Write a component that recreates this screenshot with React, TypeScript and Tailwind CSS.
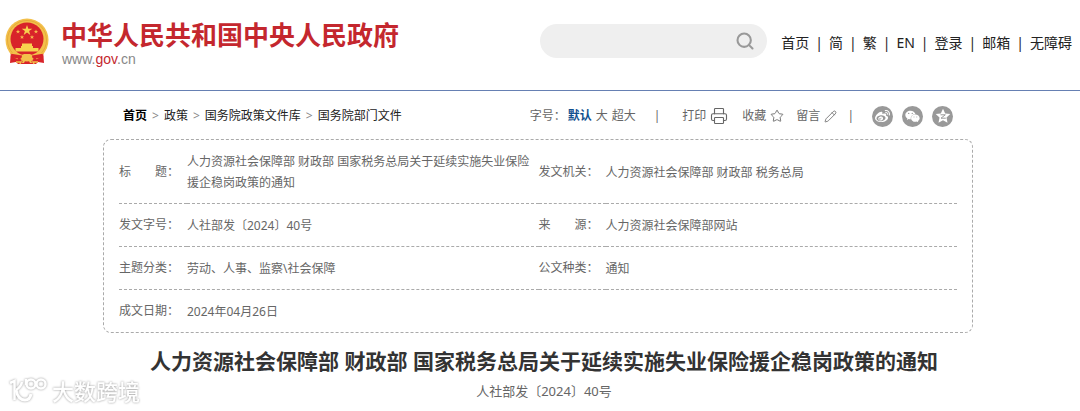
import React from 'react';
import { Pencil, Printer, Search, Star } from 'lucide-react';
import { FaWeibo, FaWeixin } from 'react-icons/fa';

const navLinks = ['首页', '简', '繁', 'EN', '登录', '邮箱', '无障碍'];
const crumbs = ['首页', '政策', '国务院政策文件库', '国务院部门文件'];

type Field = { label: string; value: string };

const rows: Field[][] = [
  [
    { label: '标　　题：', value: '人力资源社会保障部 财政部 国家税务总局关于延续实施失业保险援企稳岗政策的通知' },
    { label: '发文机关：', value: '人力资源社会保障部 财政部 税务总局' },
  ],
  [
    { label: '发文字号：', value: '人社部发〔2024〕40号' },
    { label: '来　　源：', value: '人力资源社会保障部网站' },
  ],
  [
    { label: '主题分类：', value: '劳动、人事、监察\\社会保障' },
    { label: '公文种类：', value: '通知' },
  ],
  [{ label: '成文日期：', value: '2024年04月26日' }],
];

const Emblem: React.FC = () => (
  <svg viewBox="0 0 44 48" className="h-12 w-11 shrink-0" aria-hidden="true">
    <path d="M6 32 L5 45 L11 44 L13 46 H31 L33 44 L39 45 L38 32Z" fill="#d8232a" />
    <circle cx="22" cy="22" r="21.5" fill="#f3c04b" />
    <circle cx="22" cy="22" r="19.5" fill="none" stroke="#e6ab3a" strokeWidth="1" />
    <circle cx="22" cy="21" r="16.5" fill="#d8232a" />
    <path d="M22 7l1.3 3.700h4l-3.200 2.400 1.200 3.800-3.300-2.300-3.300 2.300 1.200-3.800-3.200-2.400h4z" fill="#f8d24e" />
    <g fill="#f8b84e">
      <path d="M13 11.500l.6 1.400h1.500l-1.200 1 .5 1.500-1.400-.9-1.400.9.500-1.500-1.200-1h1.500z" />
      <path d="M31 11.500l.6 1.400h1.500l-1.200 1 .5 1.500-1.400-.9-1.400.9.500-1.500-1.200-1h1.500z" />
      <path d="M17 17l.6 1.400h1.500l-1.200 1 .5 1.500-1.400-.9-1.400.9.500-1.500-1.200-1h1.500z" />
      <path d="M27 17l.6 1.400h1.500l-1.200 1 .5 1.500-1.400-.9-1.400.9.500-1.500-1.200-1h1.500z" />
    </g>
    <path d="M17 25.500h10v2.500h1v2h5.500v3.500h-23V30H16v-2h1z" fill="#f8d24e" />
    <path d="M5 35q6-1 10 3l4-2h6l4 2q4-4 10-3l-3 4q-5-1-8 2l-6-2-6 2q-3-3-8-2z" fill="#f3c04b" />
    <path d="M6 37.500q6 1 9 1.500l-1 5M38 37.500q-6 1-9 1.500l1 5" fill="none" stroke="#d8232a" strokeWidth="3.500" />
    <path d="M15 41l3-2h8l3 2-3 1 1 3h-2l-1-2h-4l-1 2h-2l1-3z" fill="#f3c04b" />
    <path d="M11 44h5l-1 2M33 44h-5l1 2" fill="none" stroke="#f3c04b" strokeWidth="1.500" />
  </svg>
);

const Qzone: React.FC = () => (
  <svg viewBox="0 0 16 16" className="size-4" aria-hidden="true">
    <path d="M8 .8l2.200 4.700 5.100.6-3.800 3.500 1 5.100L8 12.200l-4.500 2.500 1-5.100L.7 6.100l5.100-.6z" fill="currentColor" />
    <path d="M5.500 6.800h4.800l-4.300 3.400h4.800" fill="none" stroke="#999" strokeWidth="1" />
  </svg>
);

const Watermark: React.FC = () => (
  <div className="absolute bottom-1 left-2 flex items-center gap-1 text-white drop-shadow-[0_0_1px_#999]">
    <svg viewBox="0 0 40 28" className="h-7 w-10" fill="none" stroke="currentColor" strokeWidth="2.500" aria-hidden="true">
      <path d="M2 6l4.500-2V23" />
      <path d="M14 5q-1 5-6 8" />
      <path d="M8 13q2 10 9 10 5 0 6-6" strokeWidth="3" />
      <circle cx="23" cy="7" r="4.500" />
      <circle cx="33" cy="7" r="4.500" />
      <path d="M18 2v6" />
    </svg>
    <span className="text-[22px] leading-7 font-medium">大数跨境</span>
  </div>
);

const App: React.FC = () => {
  return (
    <div
      lang="zh-CN"
      className="relative bg-white pb-2 font-['Noto_Sans','Noto_Sans_CJK_SC',sans-serif] text-xs text-[#666]"
    >
      <header className="flex h-[91px] items-start justify-between border-b border-[#6680b3] pr-2 pl-[5px]">
        <a href="#" className="flex items-start gap-3 pt-[18px]">
          <Emblem />
          <span className="flex flex-col">
            <span className="text-[26px] leading-[35px] font-bold text-[#c4272e]">中华人民共和国中央人民政府</span>
            <span className="pl-px font-['Liberation_Sans',sans-serif] text-sm leading-3 text-[#888]">
              www.<span className="text-[#c4272e]">gov</span>.cn
            </span>
          </span>
        </a>

        <div className="flex items-center gap-[14px] pt-6">
          <form className="flex h-[34px] w-[227px] items-center rounded-full bg-[#efefef] pr-3 pl-4">
            <input type="text" aria-label="搜索" className="min-w-0 flex-1 bg-transparent outline-none" />
            <button type="button" aria-label="搜索" className="text-[#999]">
              <Search size={20} strokeWidth={2.5} />
            </button>
          </form>
          <nav className="flex items-center gap-1.5 pt-1 text-sm text-[#222]">
            {navLinks.map((name, i) => (
              <React.Fragment key={name}>
                {i > 0 && <span>|</span>}
                <a href="#">{name}</a>
              </React.Fragment>
            ))}
          </nav>
        </div>
      </header>

      <main className="mx-auto w-full max-w-[874px] pr-1">
        <div className="flex h-12 items-center justify-between px-5 pt-0.5">
          <nav className="flex items-center gap-[5px] text-[#222]">
            {crumbs.map((name, i) => (
              <React.Fragment key={name}>
                {i > 0 && <span className="text-[#888]">&gt;</span>}
                <a href="#" className={i === 0 ? 'font-bold text-black' : ''}>{name}</a>
              </React.Fragment>
            ))}
          </nav>

          <div className="flex items-center">
            <span className="mr-0.5">字号：</span>
            <button type="button" className="font-bold text-[#11508f]">默认</button>
            <button type="button" className="ml-1">大</button>
            <button type="button" className="ml-1">超大</button>
            <span className="mr-[22px] ml-[18px]">|</span>
            <button type="button" className="flex items-center gap-1">
              打印 <Printer size={18} strokeWidth={1.5} />
            </button>
            <button type="button" className="ml-[14px] flex items-center gap-1">
              收藏 <Star size={14} strokeWidth={1.5} />
            </button>
            <button type="button" className="ml-3 flex items-center gap-1">
              留言 <Pencil size={13} strokeWidth={1.5} />
            </button>
            <span className="mr-[18px] ml-[10px]">|</span>
            <div className="flex gap-[9px] text-white">
              <button type="button" aria-label="微博" className="flex size-[21px] items-center justify-center rounded-full bg-[#999]">
                <FaWeibo size={15} />
              </button>
              <button type="button" aria-label="微信" className="flex size-[21px] items-center justify-center rounded-full bg-[#999]">
                <FaWeixin size={15} />
              </button>
              <button type="button" aria-label="QQ空间" className="flex size-[21px] items-center justify-center rounded-full bg-[#999]">
                <Qzone />
              </button>
            </div>
          </div>
        </div>

        <div className="rounded-lg border border-dashed border-[#aaa] px-[15px]">
          <table className="w-full table-fixed border-collapse">
            <colgroup>
              <col className="w-[68px]" />
              <col />
              <col className="w-[67px]" />
              <col />
            </colgroup>
            <tbody>
              {rows.map((fields, i) => (
                <tr key={i} className={i < rows.length - 1 ? 'border-b border-dashed border-[#aaa]' : ''}>
                  {fields.map((field) => (
                    <React.Fragment key={field.label}>
                      <th scope="row" className="text-left font-normal whitespace-nowrap">{field.label}</th>
                      <td className="pt-[11px] pb-[10px] leading-[21px]" colSpan={fields.length === 1 ? 3 : 1}>
                        {field.value}
                      </td>
                    </React.Fragment>
                  ))}
                </tr>
              ))}
            </tbody>
          </table>
        </div>

        <h1 className="mt-3 pl-3 text-center text-[21px] leading-8 font-bold whitespace-nowrap text-[#333]">
          人力资源社会保障部 财政部 国家税务总局关于延续实施失业保险援企稳岗政策的通知
        </h1>
        <p className="mt-1 pl-3 text-center text-[13px] leading-5">人社部发〔2024〕40号</p>
      </main>

      <Watermark />
    </div>
  );
};

export default App;
